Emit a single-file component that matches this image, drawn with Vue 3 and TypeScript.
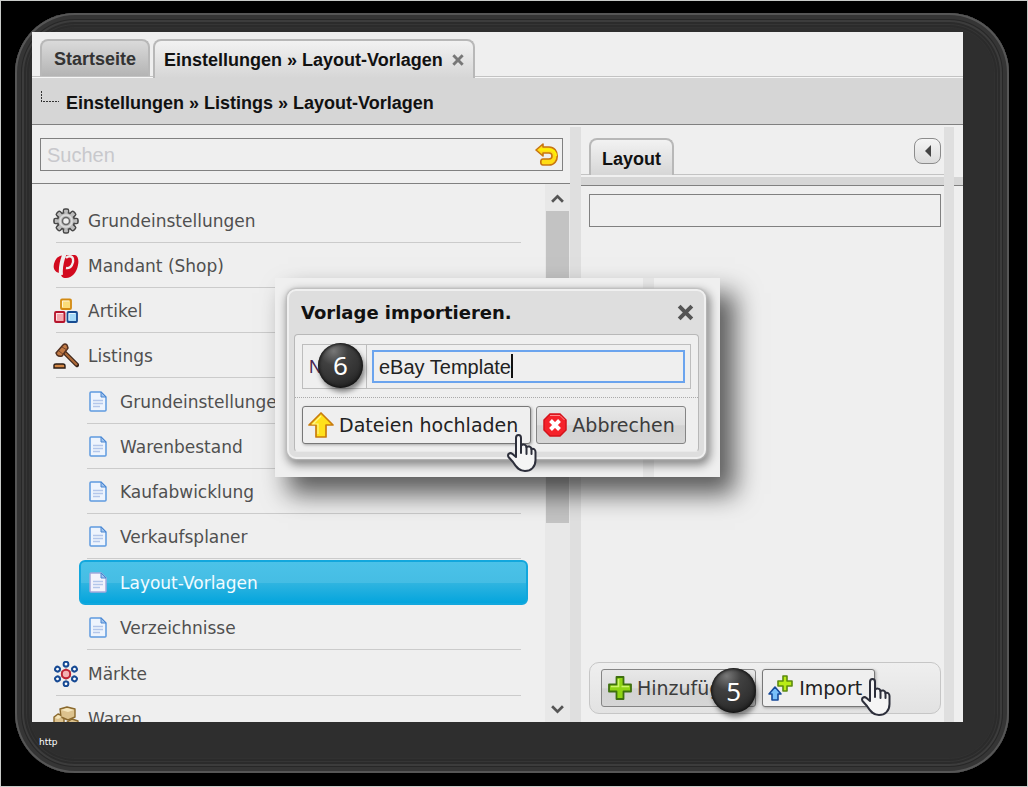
<script setup lang="ts">
import { ref } from 'vue'

interface Entry {
  label: string
  icon: string
  children?: string[]
}

const entries: Entry[] = [
  { label: 'Grundeinstellungen', icon: 'gear' },
  { label: 'Mandant (Shop)', icon: 'brand' },
  { label: 'Artikel', icon: 'boxes' },
  {
    label: 'Listings',
    icon: 'gavel',
    children: [
      'Grundeinstellungen',
      'Warenbestand',
      'Kaufabwicklung',
      'Verkaufsplaner',
      'Layout-Vorlagen',
      'Verzeichnisse',
    ],
  },
  { label: 'Märkte', icon: 'markets' },
  { label: 'Waren', icon: 'goods' },
]

const selected = ref('Layout-Vorlagen')
const query = ref('')
const filter = ref('')
const templateName = ref('eBay Template')
const teeth = [0, 45, 90, 135, 180, 225, 270, 315]
const satellites = [0, 60, 120, 180, 240, 300]
</script>

<template>
  <div class="page">
    <div class="frame">
      <main class="window">
        <nav class="tabs">
          <button type="button" class="tab idle">Startseite</button>
          <div class="tab current">
            <span>Einstellungen » Layout-Vorlagen</span>
            <button type="button" class="close small" aria-label="Tab schließen">
              <svg viewBox="0 0 12 12"><path d="M2 2L10 10M10 2L2 10" /></svg>
            </button>
          </div>
        </nav>

        <div class="crumbs">
          <svg class="branch" viewBox="0 0 20 14"><path d="M1.500 0V11M3 10.500H19" /></svg>
          <span>Einstellungen » Listings » Layout-Vorlagen</span>
        </div>

        <div class="panes">
          <section class="left">
            <div class="search-row">
              <div class="search">
                <input v-model="query" type="text" placeholder="Suchen" aria-label="Suchen" />
                <button type="button" aria-label="Zurücksetzen">
                  <svg viewBox="0 0 24 24">
                    <path d="M8 1L1 7L8 13V10H14C18 10 18 16 14 16H8C5 16 5 22 8 22H14C25 22 25 4 14 4H8Z" fill="#ffdc14" stroke="#c87510" stroke-width="1.600" stroke-linejoin="round" />
                    <path d="M5 6.500H14C18 6.500 21 9 21 13" fill="none" stroke="#fff200" stroke-width="2" />
                  </svg>
                </button>
              </div>
            </div>

            <div class="list-area">
              <ul class="tree">
                <li v-for="entry in entries" :key="entry.label">
                  <a href="#" class="row">
                    <svg v-if="entry.icon === 'gear'" class="icon" viewBox="0 0 26 26">
                      <g fill="#bcbcbc" stroke="#484848" stroke-width="1.600">
                        <rect v-for="a in teeth" :key="a" x="10.500" y="1" width="5" height="7" rx="1.500" :transform="`rotate(${a} 13 13)`" />
                        <circle cx="13" cy="13" r="8.500" />
                      </g>
                      <g fill="#bcbcbc">
                        <rect v-for="a in teeth" :key="a" x="11.300" y="2" width="3.400" height="6" :transform="`rotate(${a} 13 13)`" />
                      </g>
                      <circle cx="13" cy="13" r="6" fill="none" stroke="#dcdcdc" stroke-width="1.600" />
                      <circle cx="13" cy="13" r="3.500" fill="#eee" stroke="#666" stroke-width="1.500" />
                    </svg>
                    <svg v-else-if="entry.icon === 'brand'" class="icon" viewBox="0 0 26 26">
                      <path d="M2 8C4 4 6 3 11 2L22 2C25 3 26 7 25 12C24 19 19 25 13 25C9 25 8 23 8 20C1 20 -1 14 2 8Z" fill="#d20a1e" />
                      <path d="M12 0C9 7 7 13 8 22" fill="none" stroke="#efefef" stroke-width="4" />
                      <path d="M13 15C18 16 21 10 20 6C19 2 15 3 13 5" fill="none" stroke="#efefef" stroke-width="2.400" />
                    </svg>
                    <svg v-else-if="entry.icon === 'boxes'" class="icon" viewBox="0 0 26 26">
                      <rect x="8" y="1.500" width="10" height="9.500" rx="1" fill="#fbdc78" stroke="#d38a12" stroke-width="1.800" />
                      <rect x="2" y="14" width="9.500" height="10" rx="1" fill="#f5a9af" stroke="#b5142c" stroke-width="1.800" />
                      <rect x="14.500" y="14" width="9.500" height="10" rx="1" fill="#a5daf8" stroke="#164b91" stroke-width="1.800" />
                      <path d="M9.500 9V3H16M3.500 22V15.500H10M16 22V15.500H22" fill="none" stroke="#fff" stroke-opacity=".7" />
                    </svg>
                    <svg v-else-if="entry.icon === 'gavel'" class="icon" viewBox="0 0 26 26">
                      <path d="M11 9L24 22" stroke="#3a2419" stroke-width="4.500" stroke-linecap="round" />
                      <path d="M11 9L24 22" stroke="#ad6938" stroke-width="2.200" />
                      <path d="M3 10L10 2Q12 0 14 2L15 5L9 13Q6 14 4 12Z" fill="#c17a45" stroke="#513020" stroke-width="1.500" stroke-linejoin="round" />
                      <path d="M6 8L11 12M9 4L14 7" stroke="#75452b" />
                      <path d="M1 25V22Q1 21 3 21H10Q12 21 12 23V25Z" fill="#d18645" stroke="#2a1c14" stroke-width="1.400" />
                    </svg>
                    <svg v-else-if="entry.icon === 'markets'" class="icon" viewBox="0 0 26 26">
                      <g v-for="a in satellites" :key="a" :transform="`rotate(${a} 13 13)`">
                        <path d="M13 5V10" stroke="#999" />
                        <circle cx="13" cy="3.200" r="2.400" fill="#fff" stroke="#174a94" stroke-width="2" />
                      </g>
                      <circle cx="13" cy="13" r="4.200" fill="#f3b2b2" stroke="#be2231" stroke-width="2" />
                    </svg>
                    <svg v-else class="icon" viewBox="0 0 26 26">
                      <g fill="#dcc28d" stroke="#8a692d" stroke-width="1.400" stroke-linejoin="round">
                        <path d="M1 11L5 8L11 10V22L5 24L1 22Z" />
                        <path d="M14 16L19 13L25 15V23L20 25L14 23Z" />
                        <path d="M7 3L14 1L22 3V11L15 14L8 11Z" />
                      </g>
                      <path d="M8 4L15 6L21 4L14 2ZM2 12L5 9L9 11L5 13Z" fill="#f5e6bd" />
                    </svg>
                    <span>{{ entry.label }}</span>
                  </a>
                  <ul v-if="entry.children" class="sub">
                    <li v-for="child in entry.children" :key="child">
                      <a href="#" class="row" :class="{ selected: child === selected }" @click.prevent="selected = child">
                        <svg class="doc" viewBox="0 0 18 21">
                          <path d="M2 1H12L17 6V19Q17 20 16 20H2Q1 20 1 19V2Q1 1 2 1Z" class="paper" />
                          <path d="M12 1V6H17Z" class="fold" />
                          <path d="M4 9.500H14M4 12.500H14M4 15.500H11" class="lines" />
                        </svg>
                        <span>{{ child }}</span>
                      </a>
                    </li>
                  </ul>
                </li>
              </ul>
              <div class="scroll">
                <svg viewBox="0 0 12 10"><path d="M1 8L6 3L11 8" /></svg>
                <div class="thumb"></div>
                <svg viewBox="0 0 12 10"><path d="M1 2L6 7L11 2" /></svg>
              </div>
            </div>
          </section>

          <div class="split"></div>

          <section class="right">
            <header class="right-head">
              <button type="button" class="tab current">Layout</button>
              <button type="button" class="collapse" aria-label="Einklappen">
                <svg viewBox="0 0 8 12"><path d="M7 0V12L1 6Z" /></svg>
              </button>
            </header>
            <div class="band"></div>
            <div class="right-body">
              <input v-model="filter" class="filter" type="text" aria-label="Filter" />
              <div class="toolbar">
                <button type="button" class="btn">
                  <svg class="glyph" viewBox="0 0 24 24">
                    <path d="M8.500 1H15.500V8.500H23V15.500H15.500V23H8.500V15.500H1V8.500H8.500Z" fill="#8fd414" stroke="#3f7010" stroke-width="1.800" stroke-linejoin="round" />
                    <path d="M10.500 3V10.500H3M13.500 10.500H21" fill="none" stroke="#cdf56a" stroke-width="1.600" />
                  </svg>
                  <span>Hinzufügen</span>
                  <i class="badge step-five">5</i>
                </button>
                <button type="button" class="btn hot">
                  <svg class="glyph wide" viewBox="0 0 26 26">
                    <path d="M15 1H19V6H24V11H19V16H15V11H10V6H15Z" fill="#b9ec16" stroke="#5d8a10" stroke-width="1.600" stroke-linejoin="round" />
                    <path d="M7 12L13 19H10V25H4V19H1Z" fill="#79c0fa" stroke="#174a9a" stroke-width="1.600" stroke-linejoin="round" />
                  </svg>
                  <span>Import</span>
                  <svg class="hand on-import" viewBox="0 0 30 38">
                    <path d="M9 23V4C9 0 14 0 14 4V12C15 10 19 10 19.500 13C21 12 24 12 24.500 15C27 14 28.500 16 28.500 18V26C28.500 33 24 37 18 37C12 37 9 33 6 28L1.500 23C0 20 3 18 5.500 20Z" />
                    <path d="M14 11V19M19.500 13V20M24.500 15V20" />
                  </svg>
                </button>
              </div>
            </div>
          </section>

          <div class="split"></div>
          <div class="slice"><div class="band"></div></div>
        </div>

        <div class="overlay">
          <div class="sheet">
            <form class="dialog" role="dialog" aria-label="Vorlage importieren." @submit.prevent>
              <header class="dialog-head">
                <h2>Vorlage importieren.</h2>
                <button type="button" class="close" aria-label="Schließen">
                  <svg viewBox="0 0 12 12"><path d="M2 2L10 10M10 2L2 10" /></svg>
                </button>
              </header>
              <div class="dialog-body">
                <div class="field">
                  <label for="template-name">Name</label>
                  <div class="value">
                    <div class="entry">
                      <input id="template-name" v-model="templateName" type="text" />
                      <span class="caret"></span>
                    </div>
                  </div>
                  <i class="badge step-six">6</i>
                </div>
                <div class="actions">
                  <button type="submit" class="btn hot">
                    <svg class="glyph wide" viewBox="0 0 26 26">
                      <path d="M13 1L25 13H18V25H8V13H1Z" fill="#ffe11b" stroke="#c97c0d" stroke-width="1.700" stroke-linejoin="round" />
                      <path d="M13 4L5 12H10V22" fill="none" stroke="#fff68a" stroke-width="1.200" />
                    </svg>
                    <span>Dateien hochladen</span>
                    <svg class="hand on-upload" viewBox="0 0 30 38">
                      <path d="M9 23V4C9 0 14 0 14 4V12C15 10 19 10 19.500 13C21 12 24 12 24.500 15C27 14 28.500 16 28.500 18V26C28.500 33 24 37 18 37C12 37 9 33 6 28L1.500 23C0 20 3 18 5.500 20Z" />
                      <path d="M14 11V19M19.500 13V20M24.500 15V20" />
                    </svg>
                  </button>
                  <button type="button" class="btn">
                    <svg class="glyph" viewBox="0 0 24 24">
                      <path d="M7 1H17L23 7V17L17 23H7L1 17V7Z" fill="#f5222a" stroke="#d3131b" stroke-width="1.500" />
                      <path d="M7 2.500H17L21.500 7" fill="none" stroke="#ff8a8a" />
                      <path d="M7.500 7.500L16.500 16.500M16.500 7.500L7.500 16.500" stroke="#fff" stroke-width="4" />
                    </svg>
                    <span>Abbrechen</span>
                  </button>
                </div>
              </div>
            </form>
          </div>
        </div>
      </main>
      <footer class="caption">http</footer>
    </div>
  </div>
</template>

<style>
body {
  margin: 0;
  background: #000;
}
</style>

<style scoped>
* {
  box-sizing: border-box;
}

button,
input {
  margin: 0;
  padding: 0;
  border: 0;
  background: none;
  font: inherit;
  color: inherit;
}

input {
  outline: none;
}

svg {
  display: block;
  flex: none;
}

.page {
  display: flex;
  height: 100vh;
  padding: 12px 18px 13px 14px;
  border: 1px solid #c9cbc9;
  background: #000;
  font-family: "DejaVu Sans", Verdana, sans-serif;
  color: #444;
}

.frame {
  flex: 1;
  min-width: 0;
  display: flex;
  flex-direction: column;
  padding: 19px 46px 0 17px;
  border-radius: 60px;
  background: #2e2e2e;
  box-shadow:
    inset 0 0 0 2px #565656,
    inset 0 0 0 6px #353535,
    inset 0 0 0 7px #272727,
    inset 0 0 0 9px #3c3c3c,
    inset 0 0 0 11px #2b2b2b,
    inset 0 0 0 12px #353535,
    inset 0 0 0 14px #2b2b2b,
    inset 0 0 0 15px #313131;
}

.window {
  position: relative;
  flex: 1;
  min-height: 0;
  display: flex;
  flex-direction: column;
  overflow: hidden;
  background: #efefef;
}

.caption {
  height: 51px;
  padding: 14px 0 0 7px;
  font-size: 9px;
  line-height: 12px;
  color: #fff;
}

.tabs {
  display: flex;
  align-items: flex-end;
  gap: 3px;
  height: 46px;
  padding: 0 8px;
  box-shadow: inset 0 -1px #f6f6f6, inset 0 -2px #c3c3c3;
}

.tab {
  display: flex;
  align-items: center;
  border: 2px solid #b8b8b8;
  border-bottom: 0;
  border-radius: 8px 8px 0 0;
  font: bold 18px/22px "Liberation Sans", Arial, sans-serif;
  color: #111;
}

.tab.current {
  height: 39px;
  padding: 0 10px;
  background: linear-gradient(#f2f2f2, #d6d6d6);
}

.tabs .tab.current {
  padding: 0 8px 0 9px;
}

.tab.idle {
  height: 37px;
  margin-bottom: 2px;
  padding: 0 12px;
  background: linear-gradient(#dadada, #b4b4b4);
  color: #333;
}

.close {
  width: 19px;
  height: 19px;
  cursor: pointer;
}

.close svg {
  width: 19px;
  height: 19px;
  fill: none;
  stroke: #555;
  stroke-width: 2.5;
}

.close.small {
  width: 14px;
  height: 14px;
  margin-left: 8px;
}

.close.small svg {
  width: 14px;
  height: 14px;
  stroke: #777;
}

.crumbs {
  display: flex;
  align-items: center;
  height: 47px;
  padding: 4px 8px 0;
  border-bottom: 1px solid #808080;
  background: #d6d6d6;
  font: bold 18px/22px "Liberation Sans", Arial, sans-serif;
  color: #111;
}

.branch {
  width: 20px;
  height: 14px;
  margin: 0 6px 10px 0;
  fill: none;
  stroke: #333;
  stroke-dasharray: 2 1;
}

.panes {
  flex: 1;
  min-height: 0;
  display: grid;
  grid-template-columns: minmax(0, 1fr) 11px 363px 10px 9px;
  grid-template-rows: minmax(0, 1fr);
}

.left {
  display: flex;
  flex-direction: column;
}

.search-row {
  height: 59px;
  padding: 13px 7px 0 8px;
  border-bottom: 1px solid #808080;
}

.search {
  display: flex;
  align-items: center;
  height: 33px;
  padding: 0 3px 0 6px;
  border: 1px solid #808080;
}

.search input {
  flex: 1;
  min-width: 0;
  font: 20px/24px "Liberation Sans", Arial, sans-serif;
}

.search input::placeholder {
  color: #c8c8cc;
  opacity: 1;
}

.search svg {
  width: 24px;
  height: 24px;
}

.list-area {
  flex: 1;
  min-height: 0;
  display: flex;
}

.tree {
  flex: 1;
  margin: 0;
  padding: 14px 24px 0 20px;
  overflow: hidden;
  list-style: none;
}

.row {
  display: flex;
  align-items: center;
  gap: 9px;
  height: 45px;
  margin-left: 4px;
  padding-top: 1px;
  border-bottom: 1px solid #cbcbcb;
  font-size: 17px;
  line-height: 24px;
  color: #505050;
  text-decoration: none;
}

.icon {
  width: 26px;
  height: 26px;
  margin-left: -3px;
}

.sub {
  margin: 0;
  padding: 1px 0 1px 35px;
  list-style: none;
}

.sub .row {
  gap: 13px;
  margin-left: 0;
  padding-left: 2px;
}

.doc {
  width: 18px;
  height: 21px;
}

.paper {
  fill: #eef4fd;
  stroke: #5f9ae0;
  stroke-width: 1.5;
}

.fold {
  fill: #9fc3ef;
  stroke: #4a86d0;
}

.lines {
  fill: none;
  stroke: #b3c6ea;
  stroke-width: 1.3;
}

.sub .row.selected {
  margin: 1px -7px 0 -8px;
  padding: 0 8px;
  border: 2px solid #12a7dd;
  border-radius: 6px;
  background: linear-gradient(#4bc2e8, #45bde4 50%, #2fb4e0 52%, #04a5dd);
  color: #f0fbff;
}

.selected .paper {
  fill: #f3f3fc;
  stroke: #a5a9dc;
}

.scroll {
  display: flex;
  flex-direction: column;
  align-items: center;
  width: 25px;
  padding: 9px 0 7px;
  background: #e8e8e8;
}

.scroll svg {
  width: 13px;
  height: 11px;
  fill: none;
  stroke: #555;
  stroke-width: 2.5;
}

.thumb {
  width: 23px;
  height: 312px;
  margin: 7px 0 auto;
  background: #c3c3c3;
}

.split {
  margin-top: 2px;
  background: #dfdfdf;
}

.right {
  display: flex;
  flex-direction: column;
}

.right-head {
  display: flex;
  justify-content: space-between;
  align-items: flex-start;
  height: 50px;
  padding: 13px 3px 0 8px;
  box-shadow: inset 0 -1px #c3c3c3;
}

.right-head .tab {
  height: 37px;
  padding: 2px 11px 0;
}

.collapse {
  display: flex;
  align-items: center;
  justify-content: center;
  width: 27px;
  height: 26px;
  border: 1px solid #8c8c8c;
  border-radius: 8px;
  background: linear-gradient(#f4f4f4, #dcdcdc);
}

.collapse svg {
  width: 8px;
  height: 12px;
  fill: #444;
}

.band {
  height: 11px;
  border-top: 2px solid #f0f0f0;
  border-bottom: 1px solid #808080;
  background: #d6d6d6;
}

.slice {
  padding-top: 50px;
}

.right-body {
  flex: 1;
  display: flex;
  flex-direction: column;
  justify-content: space-between;
  padding: 8px 3px 8px 8px;
}

.filter {
  height: 33px;
  padding: 0 6px;
  border: 1px solid #808080;
  font: 20px/24px "Liberation Sans", Arial, sans-serif;
}

.toolbar {
  display: flex;
  gap: 6px;
  padding: 6px 11px;
  border: 1px solid #c6c6c6;
  border-radius: 10px;
  background: linear-gradient(#efefef, #e2e2e2);
}

.btn {
  position: relative;
  display: flex;
  align-items: center;
  gap: 5px;
  height: 38px;
  padding: 0 10px 0 6px;
  border: 1px solid #858585;
  border-radius: 3px;
  background: linear-gradient(#e8e8e8, #dddddd 50%, #d2d2d2 52%, #d6d6d6);
  font-size: 19px;
  line-height: 24px;
  color: #3c3c3c;
  white-space: nowrap;
  cursor: pointer;
}

.btn.hot {
  padding: 0 12px 0 5px;
  background: #efefef;
  color: #222;
  border-color: #777;
  box-shadow: 1px 1px 3px rgba(0, 0, 0, 0.3);
}

.glyph {
  width: 24px;
  height: 24px;
}

.glyph.wide {
  width: 26px;
  height: 26px;
}

.badge {
  position: absolute;
  display: grid;
  place-items: center;
  width: 45px;
  height: 45px;
  border-radius: 50%;
  background: radial-gradient(circle at 35% 18%, #777, #404040 30%, #333 60%, #151515);
  box-shadow: inset 0 0 3px 1px #111, 2px 4px 5px rgba(0, 0, 0, 0.45);
  font: 26px/32px "Noto Sans", "Open Sans", sans-serif;
  color: #fff;
}

.step-five {
  top: -2px;
  right: -1px;
}

.step-six {
  top: -2px;
  left: 15px;
}

.hand {
  position: absolute;
  z-index: 1;
  width: 30px;
  height: 38px;
  fill: #f5f5f5;
  stroke: #2d2f3b;
  stroke-width: 2;
  stroke-linecap: round;
  stroke-linejoin: round;
  pointer-events: none;
}

.on-import {
  right: -17px;
  bottom: -10px;
}

.on-upload {
  right: -7px;
  bottom: -29px;
}

.overlay {
  position: absolute;
  inset: 0;
  display: grid;
  place-items: center;
}

.sheet {
  width: 445px;
  padding: 11px 14px 18px 12px;
  background:
    linear-gradient(90deg, transparent 368px, #e4e4e4 368px, #e4e4e4 379px, transparent 379px),
    #efefef;
  box-shadow: 14px 16px 24px 1px rgba(0, 0, 0, 0.62);
}

.dialog {
  padding: 0 5px 5px;
  border: 2px solid #f0f0f0;
  border-radius: 9px;
  background: #dedede;
  box-shadow: 0 0 2px 1px #bbb, 2px 4px 10px 2px rgba(0, 0, 0, 0.45);
}

.dialog-head {
  display: flex;
  align-items: center;
  justify-content: space-between;
  height: 43px;
  padding: 0 4px 0 7px;
}

.dialog-head h2 {
  margin: 0;
  padding-top: 2px;
  font-size: 18px;
  line-height: 24px;
  color: #111;
}

.dialog-body {
  padding: 9px 7px 7px;
  border: 1px solid #b8b8b8;
  border-bottom-color: #e9e9e9;
  border-radius: 4px;
  background: #efefef;
}

.field {
  position: relative;
  display: flex;
  height: 45px;
  border: 1px solid #bdbdbd;
}

.field label {
  width: 64px;
  padding-left: 6px;
  border-right: 1px solid #bdbdbd;
  font: 18px/44px "Liberation Sans", Arial, sans-serif;
  color: #4a2450;
}

.value {
  flex: 1;
  min-width: 0;
  padding: 5px;
}

.entry {
  display: flex;
  align-items: center;
  height: 33px;
  padding-left: 5px;
  border: 2px solid #6ba4ee;
}

.entry input {
  field-sizing: content;
  padding-top: 2px;
  caret-color: transparent;
  font: 20px/26px "Liberation Sans", Arial, sans-serif;
  color: #222;
}

.caret {
  width: 2px;
  height: 24px;
  background: #111;
}

.actions {
  display: flex;
  gap: 5px;
  margin: 8px -7px 0;
  padding: 8px 7px 0;
  border-top: 1px dotted #aaa;
}
</style>
